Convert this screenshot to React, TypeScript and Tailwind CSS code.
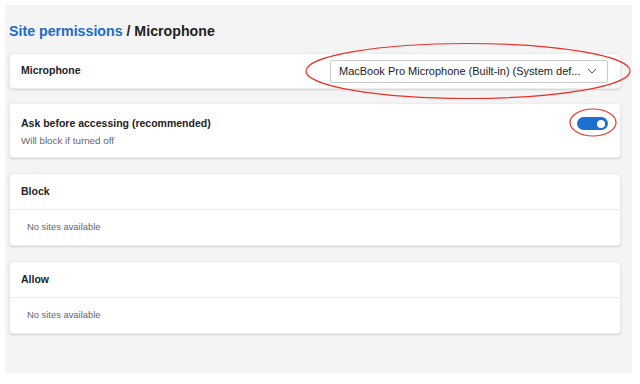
import React from 'react';

const font = { fontFamily: '"Liberation Sans", Arial, sans-serif' };

const Card: React.FC<{ children: React.ReactNode; className?: string }> = ({ children, className }) => (
  <div className={`bg-white rounded-[4px] shadow-[0_1px_2px_rgba(0,0,0,0.15)] border border-[#ececec] ${className || ''}`}>
    {children}
  </div>
);

const SiteList: React.FC<{ title: string }> = ({ title }) => (
  <Card>
    <div className="h-[36px] flex items-center px-[11px] border-b border-[#ebebeb]">
      <span className="text-[10.5px] font-bold text-[#222]">{title}</span>
    </div>
    <div className="h-[35px] flex items-center px-[17px]">
      <span className="text-[9.4px] text-[#666]">No sites available</span>
    </div>
  </Card>
);

const App: React.FC = () => {
  const [askFirst, setAskFirst] = React.useState(true);

  return (
    <div className="relative w-[640px] h-[384px] bg-white pt-[5px] pl-[5px]" style={font}>
      <div className="w-[627px] h-[368px] bg-[#f4f4f4] pl-[4px] pr-[11px]">
        {/* Header */}
        <h1 className="h-[48px] pt-[18px] text-[14.2px] font-bold text-[#222] leading-[17px]">
          <span className="text-[#1d6bc7]">Site permissions</span> / Microphone
        </h1>

        {/* Device picker */}
        <Card className="h-[36px] flex items-center justify-between pl-[11px] pr-[12px]">
          <span className="text-[10.5px] font-bold text-[#222]">Microphone</span>
          <div className="w-[278px] h-[23px] border border-[#c8c8c8] rounded-[2px] bg-white flex items-center justify-between pl-[8px] pr-[10px]">
            <span className="text-[11px] text-[#222] whitespace-nowrap">MacBook Pro Microphone (Built-in) (System def...</span>
            <svg width="10" height="6" viewBox="0 0 10 6" fill="none">
              <path d="M1 1l4 4 4-4" stroke="#555" strokeWidth="1" />
            </svg>
          </div>
        </Card>

        {/* Ask toggle */}
        <Card className="mt-[14px] h-[55px] flex items-start justify-between pl-[11px] pr-[12px] pt-[12px]">
          <div className="flex flex-col">
            <span className="text-[10.5px] font-bold text-[#222] leading-[14px]">Ask before accessing (recommended)</span>
            <span className="text-[9.8px] text-[#666] mt-[5px] leading-[12px]">Will block if turned off</span>
          </div>
          <button
            onClick={() => setAskFirst(!askFirst)}
            className={`mt-[1px] w-[31px] h-[13px] rounded-full flex items-center px-[3px] ${askFirst ? 'bg-[#1f6fd0] justify-end' : 'bg-[#999] justify-start'}`}
          >
            <span className="w-[8px] h-[8px] rounded-full bg-white" />
          </button>
        </Card>

        <div className="mt-[15px]">
          <SiteList title="Block" />
        </div>
        <div className="mt-[15px]">
          <SiteList title="Allow" />
        </div>
      </div>

      {/* red annotation marks */}
      <svg className="absolute left-0 top-0 pointer-events-none" width="640" height="384">
        <ellipse cx="468" cy="71" rx="162" ry="27.5" fill="none" stroke="#e8322b" strokeWidth="1.2" />
        <ellipse cx="593" cy="122.5" rx="23" ry="13.5" fill="none" stroke="#e8322b" strokeWidth="1.2" />
      </svg>
    </div>
  );
};

export default App;
